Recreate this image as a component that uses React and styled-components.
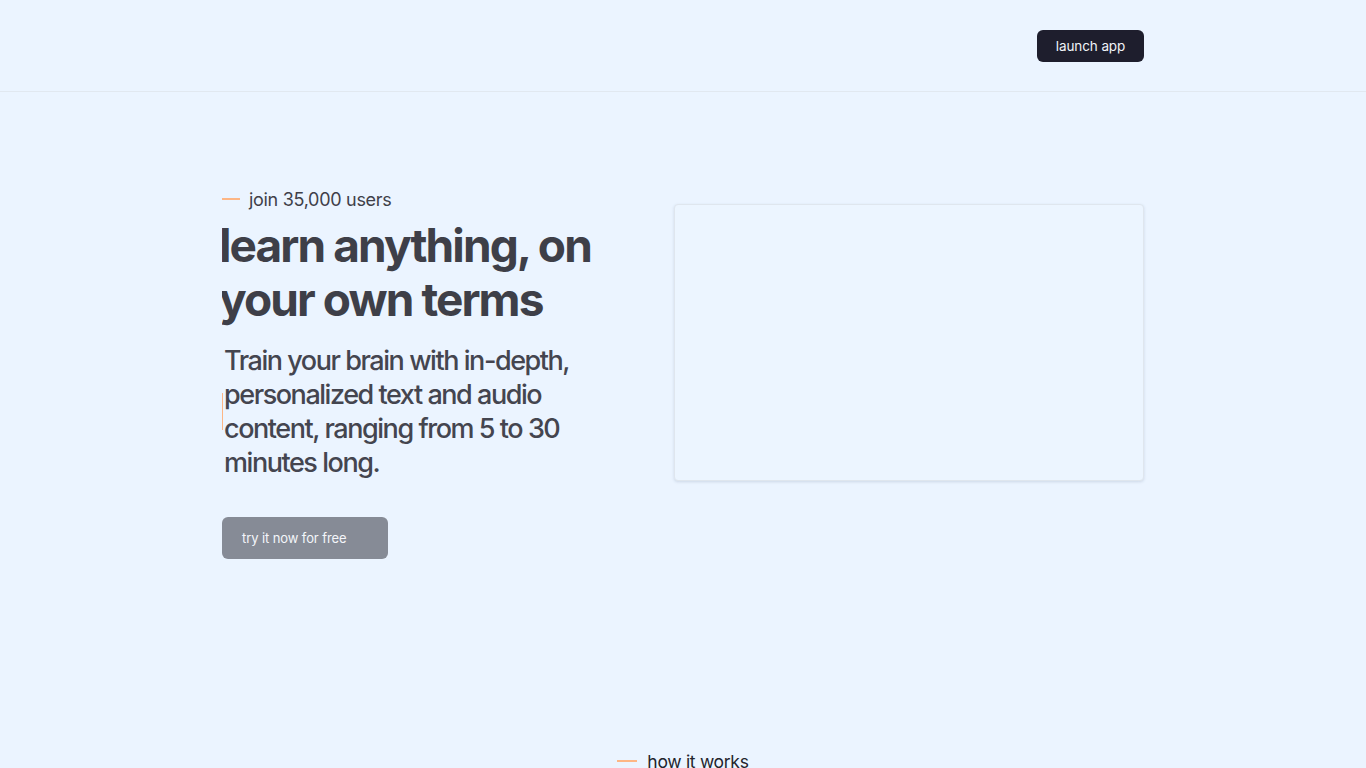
import React from "react";
import styled, { createGlobalStyle } from "styled-components";

const Global = createGlobalStyle`
  html, body { margin: 0; padding: 0; background: #ebf4ff; }
  body { font-family: "Inter", "Liberation Sans", sans-serif; -webkit-font-smoothing: antialiased; }
  * { box-sizing: border-box; }
`;

const Page = styled.div`
  min-height: 768px;
  background: #ebf4ff;
`;

const Header = styled.header`
  height: 92px;
  border-bottom: 1px solid #e1e8f0;
`;

const Container = styled.div`
  width: 922px;
  margin: 0 auto;
`;

const HeaderInner = styled(Container)`
  height: 100%;
  display: flex;
  align-items: center;
  justify-content: flex-end;
  padding-top: 1px;
`;

const DarkButton = styled.button`
  width: 107px;
  height: 32px;
  padding: 0;
  border: none;
  border-radius: 6px;
  background: #1e1e2d;
  color: #f1f3f8;
  font-family: "Inter", sans-serif;
  font-size: 13.5px;
  letter-spacing: -0.1px;
  cursor: pointer;
`;

const Hero = styled(Container)`
  display: flex;
  justify-content: space-between;
  align-items: flex-start;
  padding-top: 95px;
`;

const Left = styled.div`
  width: 420px;
  display: flex;
  flex-direction: column;
`;

const Eyebrow = styled.div`
  display: flex;
  align-items: center;
  gap: ${(p) => p.$gap || 9}px;
  font-family: "Inter", sans-serif;
  font-size: ${(p) => p.$size || 18}px;
  color: ${(p) => p.$color || "#3f4049"};
  letter-spacing: -0.3px;
  height: 24px;
`;

const Dash = styled.span`
  width: ${(p) => p.$w || 18}px;
  height: 2px;
  background: #fdb685;
`;

const TitleClip = styled.div`
  clip-path: inset(-20px -20px -20px 0);
  margin-top: 7px;
`;

const Title = styled.h1`
  margin: 0 0 0 -3px;
  font-family: "Inter", sans-serif;
  font-weight: 700;
  font-size: 46px;
  line-height: 54px;
  letter-spacing: -1.9px;
  color: #3e3f48;
`;

const Lead = styled.p`
  position: relative;
  width: 360px;
  margin: 18px 0 0 2px;
  font-family: "Inter", sans-serif;
  font-weight: 500;
  font-size: 27px;
  line-height: 34px;
  letter-spacing: -1.45px;
  color: #44454f;
`;

const Caret = styled.span`
  position: absolute;
  left: -2px;
  top: 49px;
  width: 1px;
  height: 37px;
  background: #fdb685;
`;

const GreyButton = styled.button`
  margin-top: 37px;
  align-self: flex-start;
  width: 166px;
  height: 42px;
  padding: 0 0 0 20px;
  text-align: left;
  border: none;
  border-radius: 6px;
  background: #868b96;
  color: #f4f6fa;
  font-family: "Inter", sans-serif;
  font-size: 13px;
  letter-spacing: -0.1px;
`;

const Card = styled.div`
  margin-top: 17px;
  width: 470px;
  height: 277px;
  border-radius: 4px;
  background: #ecf5ff;
  border: 1px solid #dfe6ee;
  box-shadow: 0 1px 3px rgba(90, 110, 140, 0.2);
`;

const Section = styled.section`
  margin-top: 190px;
  display: flex;
  justify-content: center;
`;

export default function App() {
  return (
    <Page>
      <Global />
      <Header>
        <HeaderInner>
          <DarkButton>launch app</DarkButton>
        </HeaderInner>
      </Header>
      <Hero>
        <Left>
          <Eyebrow>
            <Dash />
            join 35,000 users
          </Eyebrow>
          <TitleClip>
            <Title>
              learn anything, on
              <br />
              your own terms
            </Title>
          </TitleClip>
          <Lead>
            <Caret />
            Train your brain with in-depth, personalized text and audio content, ranging from 5 to 30 minutes long.
          </Lead>
          <GreyButton>try it now for free</GreyButton>
        </Left>
        <Card />
      </Hero>
      <Section>
        <Eyebrow $color="#23242c" $gap={10} $size={17.5}>
          <Dash $w={20} />
          how it works
        </Eyebrow>
      </Section>
    </Page>
  );
}
